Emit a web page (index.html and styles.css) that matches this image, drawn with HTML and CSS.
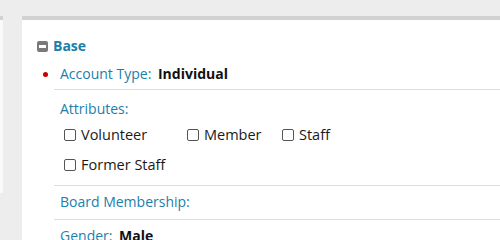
FILE: index.html
```html
<!DOCTYPE html>
<html lang="en">
<head>
    <meta charset="UTF-8">
    <meta name="viewport" content="width=device-width, initial-scale=1.0">
    <title>Contact - Base</title>
    <link rel="stylesheet" href="styles.css">
</head>
<body>
    <div class="layout">
        <div class="side-panel"></div>

        <div class="main-panel">
            <div class="section-header">
                <span class="collapse-icon"></span>
                <span class="section-title">Base</span>
            </div>

            <div class="field-list">
                <div class="field required">
                    <span class="field-label">Account Type:</span>
                    <span class="field-value">Individual</span>
                </div>

                <div class="field field-options">
                    <div class="field-label">Attributes:</div>
                    <div class="option-grid">
                        <label class="option"><input type="checkbox" class="option-box"> Volunteer</label>
                        <label class="option"><input type="checkbox" class="option-box"> Member</label>
                        <label class="option"><input type="checkbox" class="option-box"> Staff</label>
                        <label class="option"><input type="checkbox" class="option-box"> Former Staff</label>
                    </div>
                </div>

                <div class="field">
                    <span class="field-label">Board Membership:</span>
                </div>

                <div class="field">
                    <span class="field-label">Gender:</span>
                    <span class="field-value">Male</span>
                </div>
            </div>
        </div>
    </div>
</body>
</html>
```

FILE: styles.css
```css
body {
    font-family: "Open Sans", Arial, sans-serif;
    font-size: 14px;
    line-height: 18px;
    margin: 0;
    background: #ededed;
    color: #111;
}
.layout {
    display: flex;
    align-items: flex-start;
    padding-top: 16px;
}
.side-panel {
    width: 3px;
    height: 173px;
    background: #fafafa;
    border-top: 4px solid #d2d2d2;
}
.main-panel {
    flex: 1;
    margin-left: 19px;
    min-height: 230px;
    background: #fff;
    border-top: 4px solid #d2d2d2;
    padding: 17px 0 0 15px;
}
.section-header {
    display: flex;
    align-items: center;
    margin-bottom: 2px;
}
.collapse-icon {
    position: relative;
    width: 11px;
    height: 11px;
    background: #7a7a7a;
    border-radius: 2px;
    margin-right: 5px;
}
.collapse-icon::after {
    content: "";
    position: absolute;
    left: 2px;
    right: 2px;
    top: 4px;
    height: 3px;
    background: #fff;
}
.section-title {
    font-weight: bold;
    color: #1a80aa;
}
.field-list {
    margin-left: 17px;
}
.field {
    position: relative;
    padding: 7px 6px 8px;
    border-bottom: 1px solid #dedede;
}
.field.required::before {
    content: "";
    position: absolute;
    left: -11px;
    top: 15px;
    width: 5px;
    height: 5px;
    border-radius: 50%;
    background: #c80000;
}
.field:first-child {
    padding: 8px 6px 6px;
}
.field-options {
    padding-top: 10px;
}
.field-label {
    color: #1a80aa;
}
.field-value {
    font-weight: bold;
    margin-left: 3px;
}
.option-grid {
    display: grid;
    grid-template-columns: 123px 95px auto;
    row-gap: 12px;
    margin-top: 8px;
    padding-bottom: 3px;
}
.option {
    display: flex;
    align-items: center;
    font-size: 14.5px;
    color: #1a1a1a;
}
.option-box {
    appearance: none;
    width: 12px;
    height: 12px;
    margin: 0 5px 0 4px;
    border: 1px solid #555;
    border-radius: 2px;
    background: #fff;
}
```
